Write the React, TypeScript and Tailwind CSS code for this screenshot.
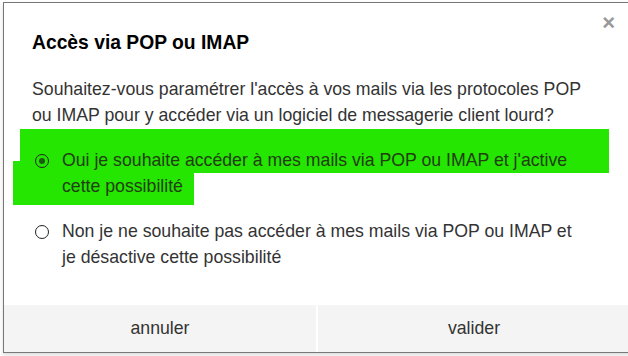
export default function App() {
  const options = [
    {
      id: 'oui',
      label: "Oui je souhaite accéder à mes mails via POP ou IMAP et j'active cette possibilité",
      checked: true,
    },
    {
      id: 'non',
      label: 'Non je ne souhaite pas accéder à mes mails via POP ou IMAP et je désactive cette possibilité',
      checked: false,
    },
  ];

  return (
    <div className="w-[628px] h-[356px] overflow-hidden bg-white font-['Liberation_Sans',Arial,sans-serif]">
      <div className="relative ml-[3px] mt-[2px] w-[628px] h-[351px] flex flex-col border border-[#777] bg-white shadow-[0_2px_4px_rgba(0,0,0,0.15)]">
        <button className="absolute top-[9px] right-[15px] text-[22px] leading-none font-bold text-[#999]">×</button>

        <div className="flex-1 pl-[28px] pt-[28px]">
          <h2 className="text-[19.3px] leading-[24px] font-bold text-black">Accès via POP ou IMAP</h2>
          <p className="mt-[21px] text-[17.7px] leading-[26px] text-[#333] w-[560px]">
            Souhaitez-vous paramétrer l'accès à vos mails via les protocoles POP ou IMAP pour y accéder via un logiciel de messagerie client lourd?
          </p>

          <div className="mt-[19px] flex flex-col gap-[19px]">
            {options.map((opt) => (
              <label key={opt.id} className="relative flex items-start gap-[13px] w-[560px]">
                {opt.checked && (
                  <>
                    <span className="absolute left-[-12px] top-[-18px] w-[589px] h-[44px] bg-[#24e600]" />
                    <span className="absolute left-[-19px] top-[14px] w-[181px] h-[44px] bg-[#24e600]" />
                  </>
                )}
                <span className="relative mt-[7px] ml-[3px] w-[14px] h-[14px] shrink-0 rounded-full border border-[#222] flex items-center justify-center">
                  {opt.checked && <span className="w-[6px] h-[6px] rounded-full bg-[#1c5a10]" />}
                </span>
                <span className={`relative w-[525px] text-[17.7px] leading-[26px] ${opt.checked ? 'text-[#223d12]' : 'text-[#333]'}`}>
                  {opt.label}
                </span>
              </label>
            ))}
          </div>
        </div>

        <div className="flex h-[47px] bg-[#f4f4f4]">
          <button className="flex-1 text-[17.7px] text-[#333] border-r-2 border-white">annuler</button>
          <button className="flex-1 text-[17.7px] text-[#333]">valider</button>
        </div>
      </div>
    </div>
  );
}
